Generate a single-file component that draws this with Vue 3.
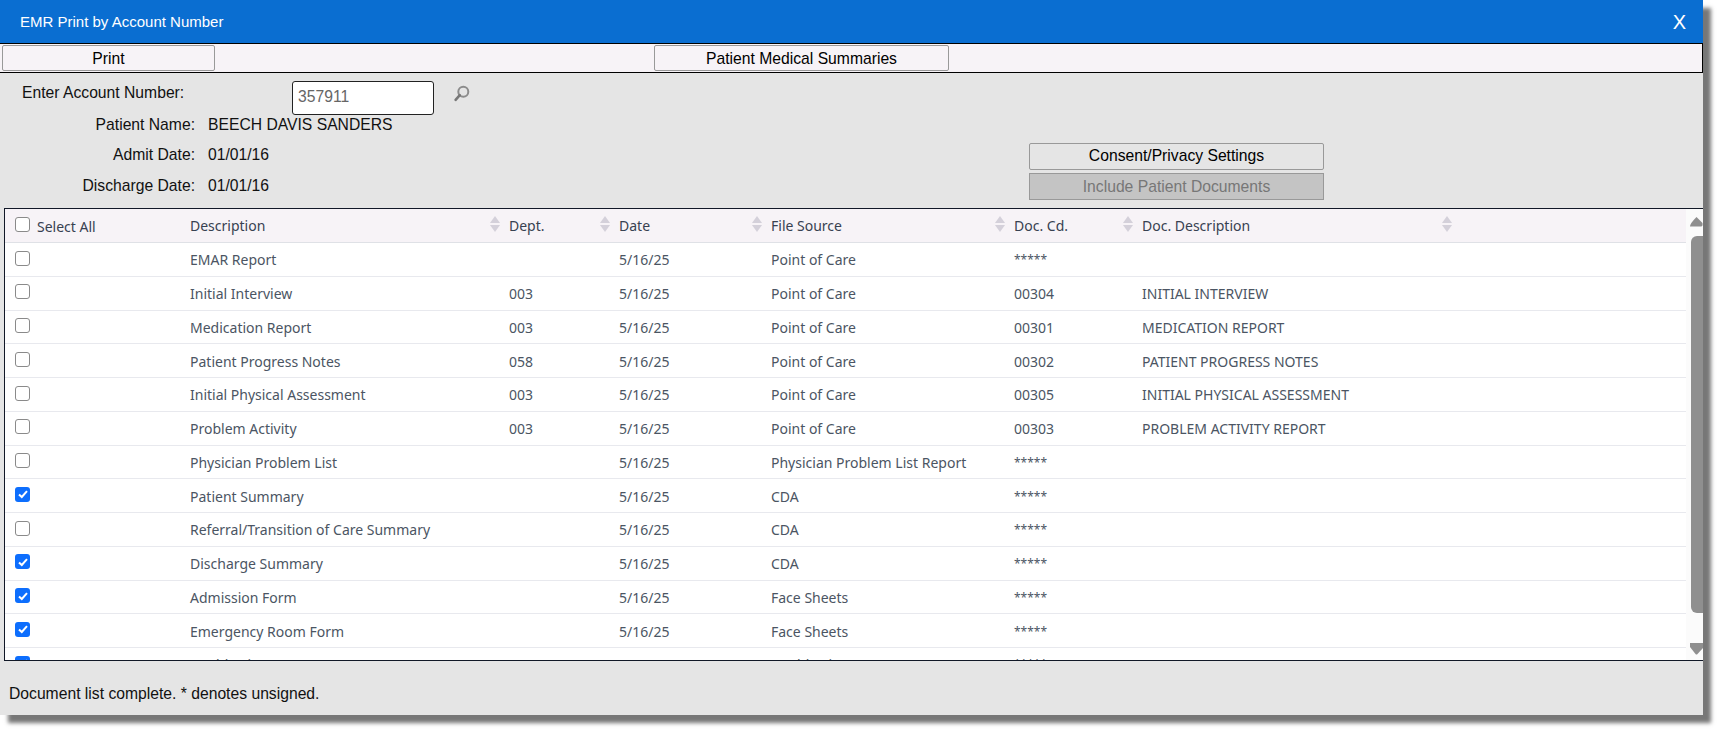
<script setup>
const columns = [
  { label: 'Description', width: 319 },
  { label: 'Dept.', width: 110 },
  { label: 'Date', width: 152 },
  { label: 'File Source', width: 243 },
  { label: 'Doc. Cd.', width: 128 },
  { label: 'Doc. Description', width: 319 },
];

const rows = [
  { checked: false, desc: 'EMAR Report', dept: '', source: 'Point of Care', code: '*****', docDesc: '' },
  { checked: false, desc: 'Initial Interview', dept: '003', source: 'Point of Care', code: '00304', docDesc: 'INITIAL INTERVIEW' },
  { checked: false, desc: 'Medication Report', dept: '003', source: 'Point of Care', code: '00301', docDesc: 'MEDICATION REPORT' },
  { checked: false, desc: 'Patient Progress Notes', dept: '058', source: 'Point of Care', code: '00302', docDesc: 'PATIENT PROGRESS NOTES' },
  { checked: false, desc: 'Initial Physical Assessment', dept: '003', source: 'Point of Care', code: '00305', docDesc: 'INITIAL PHYSICAL ASSESSMENT' },
  { checked: false, desc: 'Problem Activity', dept: '003', source: 'Point of Care', code: '00303', docDesc: 'PROBLEM ACTIVITY REPORT' },
  { checked: false, desc: 'Physician Problem List', dept: '', source: 'Physician Problem List Report', code: '*****', docDesc: '' },
  { checked: true, desc: 'Patient Summary', dept: '', source: 'CDA', code: '*****', docDesc: '' },
  { checked: false, desc: 'Referral/Transition of Care Summary', dept: '', source: 'CDA', code: '*****', docDesc: '' },
  { checked: true, desc: 'Discharge Summary', dept: '', source: 'CDA', code: '*****', docDesc: '' },
  { checked: true, desc: 'Admission Form', dept: '', source: 'Face Sheets', code: '*****', docDesc: '' },
  { checked: true, desc: 'Emergency Room Form', dept: '', source: 'Face Sheets', code: '*****', docDesc: '' },
  { checked: true, desc: 'Health History Summary', dept: '', source: 'Health History', code: '*****', docDesc: '' },
];
</script>

<template>
  <div class="page">
    <div class="window">
      <div class="title-bar">
        <span class="title">EMR Print by Account Number</span>
        <span class="close">X</span>
      </div>

      <div class="toolbar">
        <button class="tool-btn print-btn">Print</button>
        <button class="tool-btn summaries-btn">Patient Medical Summaries</button>
      </div>

      <div class="form">
        <div class="patient">
          <div class="account">
            <label class="account-label">Enter Account Number:</label>
            <input class="account-input" type="text" value="357911">
            <svg class="search" viewBox="0 0 18 18" width="18" height="18">
              <circle cx="10.3" cy="7.7" r="5" fill="none" stroke="#8c8c8c" stroke-width="2" />
              <path d="M6.8 11.2 L2.6 15.8" stroke="#777" stroke-width="2.6" stroke-linecap="round" />
            </svg>
          </div>
          <div class="info"><span class="info-label">Patient Name:</span><span>BEECH DAVIS SANDERS</span></div>
          <div class="info"><span class="info-label">Admit Date:</span><span>01/01/16</span></div>
          <div class="info"><span class="info-label">Discharge Date:</span><span>01/01/16</span></div>
        </div>
        <div class="actions">
          <button class="action-btn">Consent/Privacy Settings</button>
          <button class="action-btn disabled">Include Patient Documents</button>
        </div>
      </div>

      <div class="list">
        <div class="table-wrap">
          <table>
            <colgroup>
              <col class="check-col">
              <col v-for="col in columns" :key="col.label" :style="{ width: col.width + 'px' }">
              <col>
            </colgroup>
            <thead>
              <tr>
                <th class="check-cell">
                  <span class="box"></span>
                  <span class="select-all">Select All</span>
                </th>
                <th v-for="col in columns" :key="col.label">
                  {{ col.label }}
                  <span class="sorter"><i class="up"></i><i class="down"></i></span>
                </th>
                <th></th>
              </tr>
            </thead>
            <tbody>
              <tr v-for="row in rows" :key="row.desc">
                <td class="check-cell">
                  <span class="box" :class="{ checked: row.checked }">
                    <svg v-if="row.checked" viewBox="0 0 14 14" width="14" height="14">
                      <path d="M3 7.4 L5.8 10 L11 4.2" fill="none" stroke="#fff" stroke-width="2" />
                    </svg>
                  </span>
                </td>
                <td>{{ row.desc }}</td>
                <td>{{ row.dept }}</td>
                <td>5/16/25</td>
                <td>{{ row.source }}</td>
                <td :class="{ stars: row.code === '*****' }">{{ row.code }}</td>
                <td>{{ row.docDesc }}</td>
                <td></td>
              </tr>
            </tbody>
          </table>
        </div>
        <div class="scrollbar">
          <svg class="arrow arrow-up" viewBox="0 0 13 11" width="13" height="11">
            <path d="M6.5 1 L12.5 7 Q13 10.5 11 10.5 L0 10.5 Q0 7.5 6.5 1 Z" fill="#8f8f8f" />
          </svg>
          <span class="thumb"></span>
          <svg class="arrow arrow-down" viewBox="0 0 13 12" width="13" height="12">
            <path d="M0 0 L13 0 L13 5 L7.5 11 Q6.5 12 5.5 11 L0 4 Z" fill="#8f8f8f" />
          </svg>
        </div>
      </div>

      <div class="status">Document list complete. * denotes unsigned.</div>
    </div>
  </div>
</template>

<style scoped>
.page {
  height: 729px;
  overflow: hidden;
}

.window {
  width: 1703px;
  height: 715px;
  background: #e5e5e5;
  box-shadow: 8px 8px 4px #777;
  font-family: "Liberation Sans", Arial, sans-serif;
  font-size: 15.7px;
  color: #111;
}

.title-bar {
  height: 43px;
  background: #0a6ed1;
  color: #fff;
  display: flex;
  align-items: center;
  justify-content: space-between;
  padding: 0 17px 0 20px;
  box-sizing: border-box;
}

.title {
  font-size: 15px;
}

.close {
  font-size: 20px;
  line-height: 1;
}

.toolbar {
  height: 30px;
  box-sizing: border-box;
  background: #f7f3f7;
  border: 1px solid #000;
  border-width: 1px 1px 1px 0;
  padding: 1px 0 0 2px;
  display: flex;
}

.tool-btn {
  height: 26px;
  padding: 1px 0 0;
  background: #f7f3f7;
  border: 1px solid #999;
  border-radius: 2px;
  font: inherit;
  color: #000;
}

.print-btn {
  width: 213px;
}

.summaries-btn {
  width: 295px;
  margin-left: 439px;
}

.form {
  height: 135px;
  display: flex;
}

.patient {
  width: 1029px;
  padding-top: 8px;
  box-sizing: border-box;
}

.account {
  height: 28px;
  display: flex;
  align-items: flex-start;
}

.account-label {
  width: 270px;
  padding-left: 22px;
  line-height: 24px;
}

.account-input {
  width: 142px;
  height: 34px;
  box-sizing: border-box;
  border: 1px solid #222;
  border-radius: 3px;
  padding: 0 5px 2px;
  font: inherit;
  color: #666;
  background: #fff;
  flex: none;
}

.search {
  margin: 3px 0 0 19px;
}

.info {
  height: 30.5px;
  box-sizing: border-box;
  padding-top: 1px;
  display: flex;
  align-items: center;
  gap: 13px;
}

.info:first-of-type {
  margin-top: -1px;
  margin-bottom: 1px;
}

.info-label {
  width: 195px;
  text-align: right;
}

.actions {
  width: 295px;
  padding-top: 70px;
  display: flex;
  flex-direction: column;
  gap: 3px;
}

.action-btn {
  height: 27px;
  padding: 0 0 1px;
  background: #e5e5e5;
  border: 1px solid #999;
  border-radius: 2px;
  font: inherit;
  color: #000;
}

.action-btn.disabled {
  background: #c4c4c4;
  color: #777;
  border-radius: 0;
  padding: 0;
}

.list {
  height: 453px;
  margin-left: 4px;
  box-sizing: border-box;
  border: 1px solid #111827;
  border-right: 0;
  display: flex;
  background: #fff;
}

.table-wrap {
  width: 1681px;
  overflow: hidden;
}

table {
  width: 100%;
  border-collapse: collapse;
  table-layout: fixed;
  font-family: "Noto Sans", sans-serif;
  font-size: 14px;
  color: #4b5563;
}

.check-col {
  width: 185px;
}

th {
  height: 33px;
  background: #f7f3f7;
  font-weight: 400;
  text-align: left;
  color: #374151;
  position: relative;
  border-bottom: 1px solid #dfe1e6;
  padding: 0;
}

td {
  height: 33.75px;
  box-sizing: border-box;
  border-bottom: 1px solid #e8e9ee;
  padding: 1px 0 0;
}

td.stars {
  font-size: 12px;
}

.check-cell {
  padding-left: 10px;
}

.box {
  display: inline-block;
  width: 15px;
  height: 15px;
  box-sizing: border-box;
  border: 1.5px solid #8a8a8a;
  border-radius: 3px;
  background: #fff;
  vertical-align: middle;
  margin-bottom: 5px;
}

th .box {
  margin-bottom: 3px;
}

.box.checked {
  background: #0d6efd;
  border: 0;
}

.box svg {
  display: block;
  margin: 0.5px;
}

.select-all {
  margin-left: 7px;
  vertical-align: middle;
  color: #374151;
}

.sorter {
  position: absolute;
  right: 9px;
  top: 7px;
  display: flex;
  flex-direction: column;
  gap: 2px;
}

.sorter i {
  display: block;
  width: 0;
  height: 0;
  border-left: 5px solid transparent;
  border-right: 5px solid transparent;
}

.sorter .up {
  border-bottom: 7px solid #d4d0da;
}

.sorter .down {
  border-top: 7px solid #d4d0da;
}

.scrollbar {
  flex: 1;
  background: #fbfbfb;
  position: relative;
}

.thumb {
  position: absolute;
  left: 5px;
  top: 27px;
  width: 12px;
  height: 377px;
  background: #8f8f8f;
  border-radius: 6px 0 0 6px;
}

.arrow {
  position: absolute;
  left: 4px;
  display: block;
}

.arrow-up {
  top: 7px;
}

.arrow-down {
  top: 434px;
}

.status {
  padding: 24px 0 0 9px;
}
</style>

<style>
html, body {
  background: #fff;
}
</style>
